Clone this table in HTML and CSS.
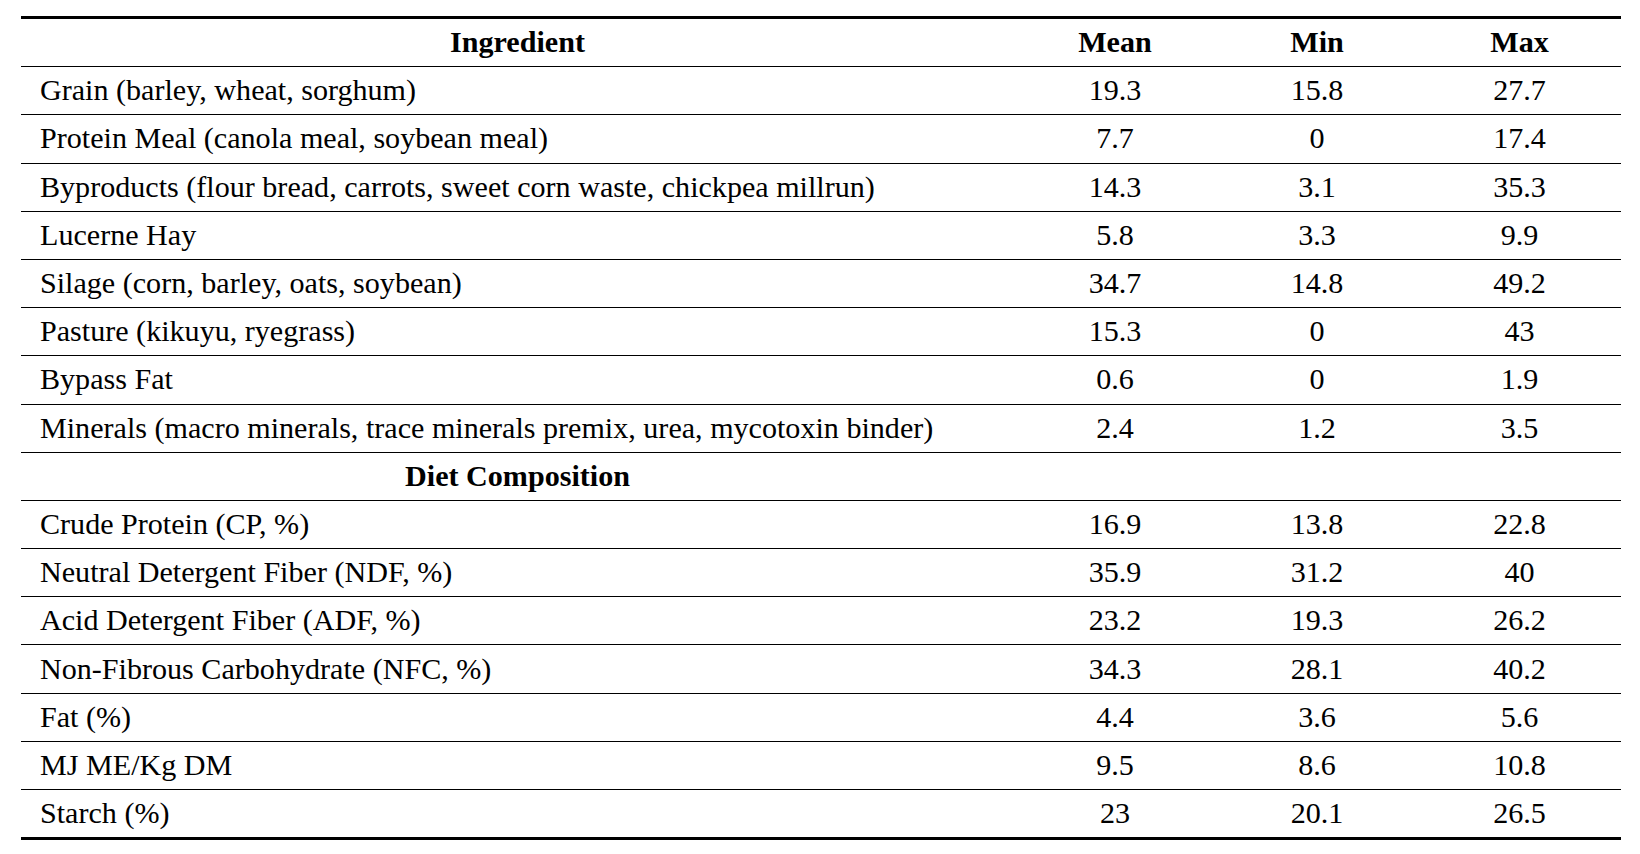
FILE: index.html
```html
<!DOCTYPE html>
<html>
<head>
<meta charset="utf-8">
<link rel="stylesheet" href="styles.css">
</head>
<body>
<div class="tbl">
  <div class="row head"><div class="c first center">Ingredient</div><div class="c">Mean</div><div class="c">Min</div><div class="c">Max</div></div>
  <div class="row"><div class="c first">Grain (barley, wheat, sorghum)</div><div class="c">19.3</div><div class="c">15.8</div><div class="c">27.7</div></div>
  <div class="row"><div class="c first">Protein Meal (canola meal, soybean meal)</div><div class="c">7.7</div><div class="c">0</div><div class="c">17.4</div></div>
  <div class="row"><div class="c first">Byproducts (flour bread, carrots, sweet corn waste, chickpea millrun)</div><div class="c">14.3</div><div class="c">3.1</div><div class="c">35.3</div></div>
  <div class="row"><div class="c first">Lucerne Hay</div><div class="c">5.8</div><div class="c">3.3</div><div class="c">9.9</div></div>
  <div class="row"><div class="c first">Silage (corn, barley, oats, soybean)</div><div class="c">34.7</div><div class="c">14.8</div><div class="c">49.2</div></div>
  <div class="row"><div class="c first">Pasture (kikuyu, ryegrass)</div><div class="c">15.3</div><div class="c">0</div><div class="c">43</div></div>
  <div class="row"><div class="c first">Bypass Fat</div><div class="c">0.6</div><div class="c">0</div><div class="c">1.9</div></div>
  <div class="row"><div class="c first">Minerals (macro minerals, trace minerals premix, urea, mycotoxin binder)</div><div class="c">2.4</div><div class="c">1.2</div><div class="c">3.5</div></div>
  <div class="row sub"><div class="c first center">Diet Composition</div><div class="c"></div><div class="c"></div><div class="c"></div></div>
  <div class="row"><div class="c first">Crude Protein (CP, %)</div><div class="c">16.9</div><div class="c">13.8</div><div class="c">22.8</div></div>
  <div class="row"><div class="c first">Neutral Detergent Fiber (NDF, %)</div><div class="c">35.9</div><div class="c">31.2</div><div class="c">40</div></div>
  <div class="row"><div class="c first">Acid Detergent Fiber (ADF, %)</div><div class="c">23.2</div><div class="c">19.3</div><div class="c">26.2</div></div>
  <div class="row"><div class="c first">Non-Fibrous Carbohydrate (NFC, %)</div><div class="c">34.3</div><div class="c">28.1</div><div class="c">40.2</div></div>
  <div class="row"><div class="c first">Fat (%)</div><div class="c">4.4</div><div class="c">3.6</div><div class="c">5.6</div></div>
  <div class="row"><div class="c first">MJ ME/Kg DM</div><div class="c">9.5</div><div class="c">8.6</div><div class="c">10.8</div></div>
  <div class="row last"><div class="c first">Starch (%)</div><div class="c">23</div><div class="c">20.1</div><div class="c">26.5</div></div>
</div>
</body>
</html>
```

FILE: styles.css
```css
html, body {
  margin: 0;
  padding: 0;
  background: #fff;
}
body {
  font-family: "Liberation Serif", "Times New Roman", serif;
  font-size: 30.1px;
  color: #000;
}
.tbl {
  margin: 16px 0 0 21px;
  width: 1600px;
  border-top: 3px solid #000;
  border-bottom: 3px solid #000;
}
.row {
  display: grid;
  grid-template-columns: 993px 202px 202px 203px;
  height: 48.2px;
  box-sizing: border-box;
  border-bottom: 1px solid #000;
}
.row.last {
  border-bottom: none;
  height: 47px;
}
.row.head, .row.sub {
  font-weight: bold;
}
.c {
  display: flex;
  align-items: center;
  justify-content: center;
  white-space: nowrap;
}
.c.first {
  justify-content: flex-start;
  padding-left: 19px;
}
.c.first.center {
  justify-content: center;
  padding-left: 0;
}
```
